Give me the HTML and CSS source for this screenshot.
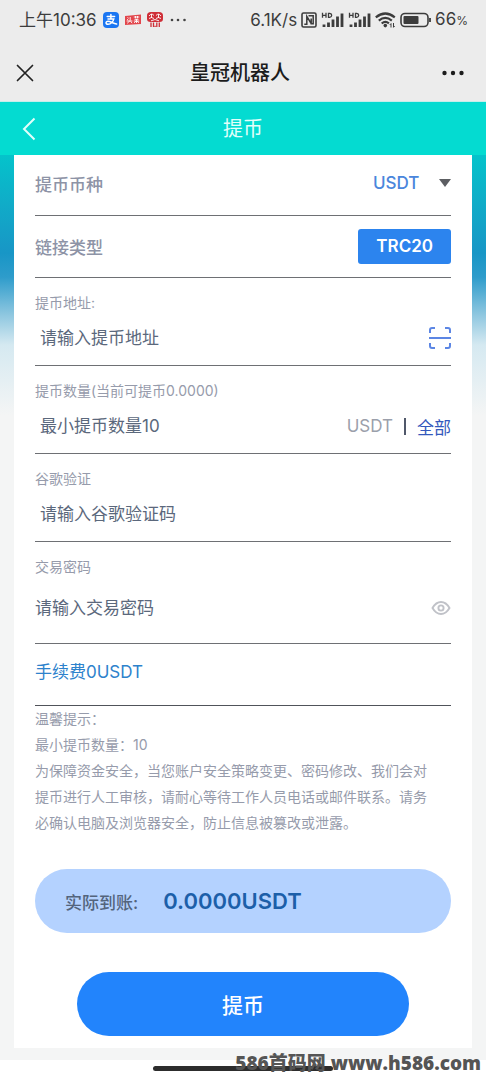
FILE: index.html
```html
<!DOCTYPE html>
<html lang="zh-CN">
<head>
<meta charset="utf-8">
<meta name="viewport" content="width=device-width, initial-scale=1">
<title>皇冠机器人</title>
<link rel="stylesheet" href="styles.css">
</head>
<body>
<div class="status">
  <div class="status-left">
    <span class="clock">上午10:36</span>
    <svg width="16" height="16" viewBox="0 0 16 16" aria-hidden="true">
      <rect width="16" height="16" rx="4" fill="#1b76f2"/>
      <path d="M4.200 4.600h7.400M7.900 2.600v4.200M5 6.900h5.800C10.200 9.300 8 12.300 5 12.300c-2.600 0-2.600-3.100 0-3.100 2.600 0 5 2.300 8.600 2.900" fill="none" stroke="#fff" stroke-width="1.500" stroke-linecap="round"/>
    </svg>
    <svg width="16" height="16" viewBox="0 0 16 16" aria-hidden="true">
      <path d="M0 4l16-1.500v9.500l-16 1z" fill="#e2464c"/>
      <path d="M2.500 5.500l1.200.8M2 7.300l1.200.8M5.200 5v3.500L2.200 11.300M1.600 9h5.800M5.500 9.500L7.200 11M8.800 5h5.500M10.500 4v2.300M12.500 4v2.300M9.500 7.300h4M8.800 9h5.500M11.500 7v4M11 9.200L9 10.800M12 9.200l2 1.500" fill="none" stroke="#fff" stroke-width=".9"/>
    </svg>
    <svg width="16" height="16" viewBox="0 0 16 16" aria-hidden="true">
      <path d="M0 3.500Q0 0 4 0h8q4 0 4 3.500V7q0 3-3.500 3h-9Q0 10 0 7z" fill="#cf2f38"/>
      <path d="M2 4q2.500-3.500 5-.5M9 3.500q2.500-3 5 .5M2 6.500q2.500-2 5 0M9 6.500q2.500-2 5 0M4 8.800q4-2.500 8 0M4.500 2v4M11.500 2v4" fill="none" stroke="#fff" stroke-width=".9"/>
      <path d="M4 10.500v4.500M6.500 10.500v4.500M9.800 10.500v4.500M12.300 10.500v4.500M8.100 13.800V15" stroke="#cf2f38" stroke-width="1.300"/>
    </svg>
    <svg class="more-small" width="18" height="16" viewBox="0 0 18 16" aria-hidden="true">
      <g fill="#444"><circle cx="3" cy="8" r="1.300"/><circle cx="9" cy="8" r="1.300"/><circle cx="15.500" cy="8" r="1.300"/></g>
    </svg>
  </div>
  <div class="status-right">
    <span class="speed">6.1K/s</span>
    <svg width="16" height="16" viewBox="0 0 16 16" fill="none" stroke="#3c3c3c" aria-hidden="true">
      <rect x="1" y="1" width="14" height="14" rx="1.500" stroke-width="1.600"/>
      <path d="M3.300 12.200h2.500V4.300L10.200 11.500M7.500 3.800h4.700v7.900H10.200V6.500" stroke-width="1.500"/>
    </svg>
    <svg width="23" height="16" viewBox="0 0 23 16" fill="none" stroke="#3c3c3c" aria-hidden="true">
      <path d="M1.500 .8v5M5 .8v5M1.500 3.300H5M7.500 1.300v4h1.200q2-.2 2-2t-2-2z" stroke-width="1.300"/>
      <path d="M3 12.500V15M7.500 10.500V15M12 7.500V15M16.500 4.500V15M21 1.500V15" stroke-width="2.800"/>
    </svg>
    <svg width="23" height="16" viewBox="0 0 23 16" fill="none" stroke="#3c3c3c" aria-hidden="true">
      <path d="M1.500 .8v5M5 .8v5M1.500 3.300H5M7.500 1.300v4h1.200q2-.2 2-2t-2-2z" stroke-width="1.300"/>
      <path d="M3 12.500V15M7.500 10.500V15M12 7.500V15M16.500 4.500V15M21 1.500V15" stroke-width="2.800"/>
    </svg>
    <svg class="wifi" width="21" height="16" viewBox="0 0 21 16" fill="none" stroke="#3c3c3c" aria-hidden="true">
      <path d="M.8 5.300Q10.300 -2.300 19.800 5.300M3.800 8.600Q10.300 3.200 16.800 8.600M6.700 11.500Q10.300 8.300 13.900 11.300" stroke-width="2.200"/>
      <circle cx="10.300" cy="13.600" r="1.800" fill="#3c3c3c" stroke="none"/>
      <path d="M16 11.500V15.500M14.800 12.900l1.200-1.200M18.500 11v4.300M19.700 14.100l-1.200 1.200" stroke-width="1"/>
    </svg>
    <svg width="31" height="16" viewBox="0 0 31 16" aria-hidden="true">
      <rect x="1" y="1.500" width="27" height="13" rx="4" fill="none" stroke="#3c3c3c" stroke-width="1.600"/>
      <rect x="3.500" y="4" width="15" height="8" rx="1" fill="#3c3c3c"/>
      <path d="M30 6v4" stroke="#3c3c3c" stroke-width="1.800"/>
    </svg>
    <span class="battery">66<small>%</small></span>
  </div>
</div>

<header class="titlebar">
  <button class="icon-btn" type="button" aria-label="关闭">
    <svg width="18" height="18" viewBox="0 0 18 18" fill="none" stroke="#222" stroke-width="1.700" stroke-linecap="round" aria-hidden="true"><path d="M1.500 1.500l15 15M16.500 1.500l-15 15"/></svg>
  </button>
  <h1 class="app-title">皇冠机器人</h1>
  <button class="icon-btn icon-btn-end" type="button" aria-label="更多">
    <svg width="22" height="6" viewBox="0 0 22 6" fill="#1c1c1c" aria-hidden="true"><circle cx="2.500" cy="3" r="2.200"/><circle cx="11" cy="3" r="2.200"/><circle cx="19.500" cy="3" r="2.200"/></svg>
  </button>
</header>

<nav class="navbar">
  <a class="back" href="#" aria-label="返回">
    <svg width="14" height="24" viewBox="0 0 14 24" fill="none" stroke="#e2fffb" stroke-width="2" aria-hidden="true"><path d="M12.500 1.500L2 12l10.500 10.500"/></svg>
  </a>
  <h2 class="nav-title">提币</h2>
</nav>

<main class="page">
  <form class="card">
    <div class="row">
      <label class="row-label" for="coin">提币币种</label>
      <span class="select-wrap">
        <select class="coin" id="coin"><option>USDT</option></select>
        <svg width="12" height="8" viewBox="0 0 12 8" aria-hidden="true"><path d="M0 0h12L6 8z" fill="#5c5e62"/></svg>
      </span>
    </div>
    <div class="row">
      <span class="row-label">链接类型</span>
      <button class="chain" type="button">TRC20</button>
    </div>
    <div class="field">
      <label class="field-label" for="address">提币地址:</label>
      <div class="field-line">
        <input class="input" id="address" type="text" placeholder="请输入提币地址">
        <button class="icon-btn" type="button" aria-label="扫码">
          <svg width="22" height="22" viewBox="0 0 22 22" fill="none" stroke="#5c86e4" stroke-width="2" aria-hidden="true"><path d="M1 6V3q0-2 2-2h3M16 1h3q2 0 2 2v3M21 16v3q0 2-2 2h-3M6 21H3q-2 0-2-2v-3M0 11h22"/></svg>
        </button>
      </div>
    </div>
    <div class="field">
      <label class="field-label" for="amount">提币数量(当前可提币0.0000)</label>
      <div class="field-line">
        <input class="input" id="amount" type="text" placeholder="最小提币数量10">
        <span class="unit">USDT</span>
        <span class="bar"></span>
        <button class="all" type="button">全部</button>
      </div>
    </div>
    <div class="field">
      <label class="field-label" for="google">谷歌验证</label>
      <div class="field-line">
        <input class="input" id="google" type="text" placeholder="请输入谷歌验证码">
      </div>
    </div>
    <div class="field field-tall">
      <label class="field-label" for="password">交易密码</label>
      <div class="field-line">
        <input class="input input-flush" id="password" type="password" placeholder="请输入交易密码">
        <button class="icon-btn" type="button" aria-label="显示密码">
          <svg width="20" height="14" viewBox="0 0 20 14" fill="none" stroke="#c0c2c8" stroke-width="1.900" aria-hidden="true"><path d="M1.500 7Q5 1 10 1t8.500 6Q15 13 10 13T1.500 7z"/><circle cx="10" cy="7" r="2.600"/></svg>
        </button>
      </div>
    </div>
    <p class="fee">手续费0USDT</p>
    <div class="notes">
      <p>温馨提示：</p>
      <p>最小提币数量：10</p>
      <p>为保障资金安全，当您账户安全策略变更、密码修改、我们会对提币进行人工审核，请耐心等待工作人员电话或邮件联系。请务必确认电脑及浏览器安全，防止信息被篡改或泄露。</p>
    </div>
    <div class="receive">
      <span class="receive-label">实际到账:</span>
      <output class="receive-value">0.0000USDT</output>
    </div>
    <button class="submit" type="submit">提币</button>
  </form>
</main>
<footer class="footer">
  <span class="home-bar"></span>
  <span class="watermark">586首码网 www.h586.com</span>
</footer>
</body>
</html>
```
FILE: styles.css
```css
* { box-sizing: border-box; }
body {
  margin: 0;
  background: #fff;
  color: #5b687c;
  font-family: "Inter", "Noto Sans CJK SC", sans-serif;
  font-size: 17px;
}
h1, h2, p { margin: 0; }
button, input, select { font: inherit; color: inherit; border: 0; background: none; padding: 0; margin: 0; }
button, select { cursor: pointer; }
svg { display: block; flex: none; }

.status {
  display: flex;
  justify-content: space-between;
  align-items: center;
  height: 40px;
  padding: 0 18px 0 19px;
  background: #ececec;
  color: #3c3c3c;
  white-space: nowrap;
}
.status-left, .status-right { display: flex; align-items: center; line-height: 24px; }
.status-left { gap: 6px; }
.status-right { gap: 4px; }
.battery small { font-size: 12px; }

.titlebar {
  display: grid;
  grid-template-columns: 1fr auto 1fr;
  align-items: center;
  height: 62px;
  padding: 4px 22px 0 16px;
  background: #ececec;
  border-bottom: 1px solid #c5eeea;
}
.app-title { font-size: 20px; font-weight: 500; line-height: 30px; color: #1c1c1c; }
.icon-btn { display: flex; align-items: center; }
.icon-btn-end { justify-self: end; }

.navbar {
  display: grid;
  grid-template-columns: 1fr auto 1fr;
  align-items: center;
  height: 53px;
  padding: 0 22px;
  background: #04dbd1;
}
.nav-title { font-size: 20px; font-weight: 400; line-height: 30px; color: #e2fffb; }

.page {
  padding: 0 14px 12px;
  background: linear-gradient(#04c3cb 0, #10acc8 48px, #1896c6 98px, #2e9ccb 122px, #8ac5df 158px, #d5e9f1 190px, #f4f5f5 260px);
}
.card { padding: 0 21px 12px; background: #fff; }

.row {
  display: flex;
  justify-content: space-between;
  align-items: center;
  height: 62px;
  border-bottom: 1px solid #6e7074;
}
.row:first-child { height: 61px; padding-bottom: 4px; }
.row-label { font-weight: 500; color: #8d93a6; }
.select-wrap { display: flex; align-items: center; gap: 19px; }
.coin { appearance: none; font-weight: 500; color: #4a86dc; }
.chain {
  padding: 0 18px;
  border-radius: 3px;
  background: #2c84ee;
  color: #fff;
  font-weight: 600;
  line-height: 35px;
}

.field { padding-top: 14px; height: 88px; border-bottom: 1px solid #6e7074; }
.field-label { display: block; font-size: 14px; line-height: 22px; color: #969bab; }
.field-line { display: flex; align-items: center; height: 48px; }
.field-tall { height: 102px; }
.field-tall .field-line { height: 60px; }
.input { flex: 1; min-width: 0; height: 32px; padding-left: 5px; outline: 0; }
.input-flush { padding-left: 0; }
.input::placeholder { color: #5b687c; opacity: 1; }
.unit { color: #9b9fab; }
.bar { width: 2px; height: 17px; margin: 0 11px; background: #50586a; }
.all { color: #3458bc; }

.fee { height: 62px; padding-top: 14px; border-bottom: 1px solid #50535a; line-height: 28px; color: #2d82cc; }
.notes { padding-right: 20px; font-size: 14px; line-height: 26px; color: #969bab; }

.receive {
  display: flex;
  align-items: center;
  gap: 25px;
  height: 64px;
  margin-top: 33px;
  padding: 0 30px;
  border-radius: 32px;
  background: #b4d2ff;
}
.receive-label { font-weight: 500; color: #53647c; }
.receive-value { font-size: 22px; font-weight: 600; color: #1c5fa9; }
.submit {
  display: block;
  width: 80%;
  height: 64px;
  margin: 39px auto 0;
  border-radius: 32px;
  background: #2284fc;
  color: #fff;
  font-size: 21px;
  font-weight: 500;
}

.footer { position: relative; padding: 6px 0 9px; }
.home-bar { display: block; width: 180px; height: 5px; margin: 0 auto; border-radius: 3px; background: #2d2d2d; }
.watermark {
  position: absolute;
  right: 5px;
  bottom: 5px;
  font-family: "Open Sans", "Noto Sans CJK SC", sans-serif;
  font-size: 19px;
  font-weight: 800;
  line-height: 24px;
  color: #555;
  white-space: nowrap;
}
```
